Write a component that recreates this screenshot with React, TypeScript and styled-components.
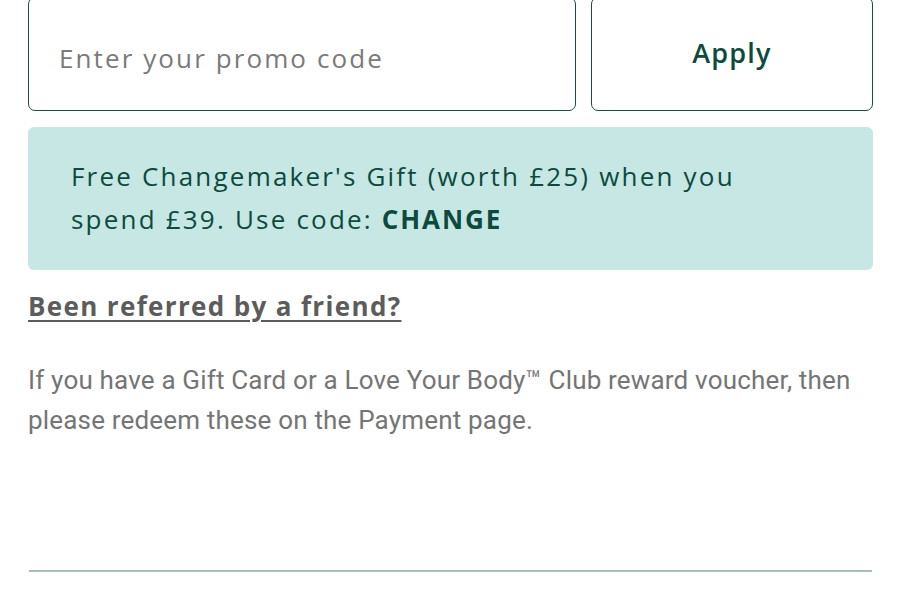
import styled, { createGlobalStyle } from "styled-components";

const Global = createGlobalStyle`
  html, body {
    margin: 0;
    padding: 0;
    background: #ffffff;
  }
  * {
    box-sizing: border-box;
  }
`;

const Styles = {
  Root: styled.main`
    width: 899px;
    padding: 0 26px 0 28px;
    margin-top: -3px;
  `,
  PromoRow: styled.form`
    display: flex;
    gap: 15px;
    height: 114px;
  `,
  CodeInput: styled.input`
    flex: 1;
    min-width: 0;
    border: 1.5px solid #1d4a43;
    border-radius: 7px;
    padding: 8px 30px 0;
    font-family: "Open Sans", sans-serif;
    font-size: 26px;
    letter-spacing: 2.1px;
    color: #333;
    background: white;
    outline: none;

    &::placeholder {
      color: #7a7a7a;
    }
  `,
  ApplyButton: styled.button`
    width: 282px;
    flex-shrink: 0;
    border: 1.5px solid #1d4a43;
    border-radius: 7px;
    background: white;
    padding: 0 0 4px;
    font-family: "Open Sans", sans-serif;
    font-size: 27px;
    font-weight: 600;
    letter-spacing: 1.2px;
    color: #0d4a3d;
  `,
  Offer: styled.section`
    margin-top: 16px;
    background-color: #c7e7e5;
    border-radius: 6px;
    padding: 28px 60px 29px 43px;
    font-family: "Open Sans", sans-serif;
    font-size: 26px;
    line-height: 43px;
    letter-spacing: 2.2px;
    color: #0d4a3d;

    & strong {
      font-weight: 700;
      letter-spacing: 1.9px;
    }
  `,
  ReferLink: styled.a`
    display: inline-block;
    margin-top: 18px;
    font-family: "Open Sans", sans-serif;
    font-size: 26px;
    font-weight: 700;
    letter-spacing: 1.35px;
    color: #5c5c5c;
    text-decoration: underline;
    text-underline-offset: 4px;
    text-decoration-thickness: 2px;
  `,
  Note: styled.p`
    margin: 36px 0 0;
    font-family: "Roboto", sans-serif;
    font-size: 26px;
    letter-spacing: 0.18px;
    line-height: 40px;
    color: #757575;
  `,
  Divider: styled.hr`
    margin: 130px 1px 0;
    border: none;
    border-top: 2px solid #a9bdb9;
  `,
};

export default function App() {
  return (
    <>
      <Global />
      <Styles.Root>
        <Styles.PromoRow onSubmit={(e) => e.preventDefault()}>
          <Styles.CodeInput placeholder="Enter your promo code" />
          <Styles.ApplyButton type="submit">Apply</Styles.ApplyButton>
        </Styles.PromoRow>
        <Styles.Offer>
          Free Changemaker's Gift (worth £25) when you spend £39. Use code:{" "}
          <strong>CHANGE</strong>
        </Styles.Offer>
        <Styles.ReferLink href="#">Been referred by a friend?</Styles.ReferLink>
        <Styles.Note>
          If you have a Gift Card or a Love Your Body™ Club reward voucher, then
          please redeem these on the Payment page.
        </Styles.Note>
        <Styles.Divider />
      </Styles.Root>
    </>
  );
}
